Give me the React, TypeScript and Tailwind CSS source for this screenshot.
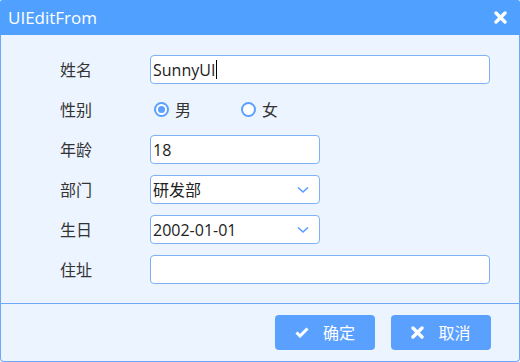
import React from "react";

const font = { fontFamily: '"Open Sans", "Noto Sans CJK SC", sans-serif' };

function Chevron() {
  return (
    <svg width="12" height="8" viewBox="0 0 12 8" className="shrink-0">
      <path d="M1 1.5 L6 6 L11 1.5" fill="none" stroke="#5a9cff" strokeWidth="1.6" />
    </svg>
  );
}

function Radio({ checked, label }: { checked: boolean; label: string }) {
  return (
    <div className="flex items-center gap-[6px]">
      <div className="w-[15px] h-[15px] rounded-full border-2 border-[#5aa0ff] flex items-center justify-center bg-white">
        {checked && <div className="w-[7px] h-[7px] rounded-full bg-[#5aa0ff]" />}
      </div>
      <span className="text-[16px] text-[#333]">{label}</span>
    </div>
  );
}

function Row({ label, children }: { label: string; children: React.ReactNode }) {
  return (
    <div className="flex items-center h-[29px]">
      <div className="w-[90px] text-[16px] text-[#333]">{label}</div>
      {children}
    </div>
  );
}

const inputCls =
  "h-[29px] bg-white border border-[#7eb1f7] rounded-[4px] flex items-center px-[2px] text-[16px] text-[#222]";

export default function App() {
  return (
    <div className="w-[520px] h-[362px] flex flex-col" style={font}>
      <div className="h-[35px] bg-[#50a0ff] flex items-center justify-between pl-[8px] pr-[13px] rounded-t-[2px]">
        <span className="text-white text-[17px]">UIEditFrom</span>
        <svg width="13" height="13" viewBox="0 0 13 13">
          <path d="M2 2 L11 11 M11 2 L2 11" stroke="white" strokeWidth="3.4" strokeLinecap="round" />
        </svg>
      </div>
      <div className="flex-1 flex flex-col bg-[#ecf4ff] border-x border-b border-[#6ea7f5] rounded-b-[4px]">
        <div className="h-[268px] flex flex-col gap-[11px] pt-[20px] pl-[59px]">
          <Row label="姓名">
            <div className={inputCls + " w-[340px]"}>
              <span>SunnyUI</span>
              <span className="w-px h-[19px] bg-black ml-[1px]" />
            </div>
          </Row>
          <Row label="性别">
            <div className="flex items-center pl-[4px] gap-[50px]">
              <Radio checked label="男" />
              <Radio checked={false} label="女" />
            </div>
          </Row>
          <Row label="年龄">
            <div className={inputCls + " w-[170px]"}>18</div>
          </Row>
          <Row label="部门">
            <div className={inputCls + " w-[170px] justify-between pr-[10px]"}>
              <span>研发部</span>
              <Chevron />
            </div>
          </Row>
          <Row label="生日">
            <div className={inputCls + " w-[170px] justify-between pr-[10px]"}>
              <span>2002-01-01</span>
              <Chevron />
            </div>
          </Row>
          <Row label="住址">
            <div className={inputCls + " w-[340px]"} />
          </Row>
        </div>
        <div className="border-t border-[#6ea7f5] flex-1 flex justify-end items-start pt-[11px] pr-[28px] gap-[16px]">
          <button className="w-[100px] h-[35px] rounded-[4px] bg-[#5aa0ff] flex items-center justify-center gap-[14px] text-white text-[16px]">
            <svg width="14" height="11" viewBox="0 0 14 11">
              <path d="M1.5 5.5 L5 9 L12.5 1.5" fill="none" stroke="white" strokeWidth="3" />
            </svg>
            <span>确定</span>
          </button>
          <button className="w-[100px] h-[35px] rounded-[4px] bg-[#5aa0ff] flex items-center justify-center gap-[14px] text-white text-[16px]">
            <svg width="13" height="13" viewBox="0 0 13 13">
              <path d="M2 2 L11 11 M11 2 L2 11" stroke="white" strokeWidth="3.4" strokeLinecap="round" />
            </svg>
            <span>取消</span>
          </button>
        </div>
      </div>
    </div>
  );
}
